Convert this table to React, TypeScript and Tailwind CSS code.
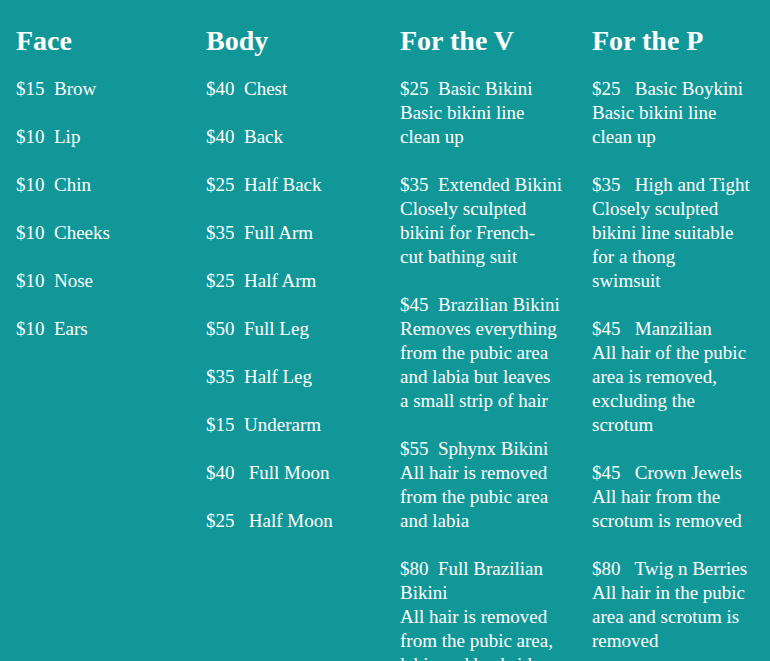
import React from 'react';

type Item = { price: string; name: string; lines?: string[] };

const columns: { title: string; items: Item[] }[] = [
  {
    title: 'Face',
    items: [
      { price: '$15', name: 'Brow' },
      { price: '$10', name: 'Lip' },
      { price: '$10', name: 'Chin' },
      { price: '$10', name: 'Cheeks' },
      { price: '$10', name: 'Nose' },
      { price: '$10', name: 'Ears' },
    ],
  },
  {
    title: 'Body',
    items: [
      { price: '$40', name: 'Chest' },
      { price: '$40', name: 'Back' },
      { price: '$25', name: 'Half Back' },
      { price: '$35', name: 'Full Arm' },
      { price: '$25', name: 'Half Arm' },
      { price: '$50', name: 'Full Leg' },
      { price: '$35', name: 'Half Leg' },
      { price: '$15', name: 'Underarm' },
      { price: '$40', name: ' Full Moon' },
      { price: '$25', name: ' Half Moon' },
    ],
  },
  {
    title: 'For the V',
    items: [
      { price: '$25', name: 'Basic Bikini', lines: ['Basic bikini line', 'clean up'] },
      { price: '$35', name: 'Extended Bikini', lines: ['Closely sculpted', 'bikini for French-', 'cut bathing suit'] },
      {
        price: '$45',
        name: 'Brazilian Bikini',
        lines: ['Removes everything', 'from the pubic area', 'and labia but leaves', 'a small strip of hair'],
      },
      { price: '$55', name: 'Sphynx Bikini', lines: ['All hair is removed', 'from the pubic area', 'and labia'] },
      {
        price: '$80',
        name: 'Full Brazilian',
        lines: ['Bikini', 'All hair is removed', 'from the pubic area,', 'labia and backside'],
      },
    ],
  },
  {
    title: 'For the P',
    items: [
      { price: '$25', name: ' Basic Boykini', lines: ['Basic bikini line', 'clean up'] },
      { price: '$35', name: ' High and Tight', lines: ['Closely sculpted', 'bikini line suitable', 'for a thong', 'swimsuit'] },
      { price: '$45', name: ' Manzilian', lines: ['All hair of the pubic', 'area is removed,', 'excluding the', 'scrotum'] },
      { price: '$45', name: ' Crown Jewels', lines: ['All hair from the', 'scrotum is removed'] },
      { price: '$80', name: ' Twig n Berries', lines: ['All hair in the pubic', 'area and scrotum is', 'removed'] },
    ],
  },
];

const App: React.FC = () => {
  return (
    <div className="h-[661px] w-[770px] overflow-hidden bg-[#129799] pl-4 pt-6 text-white [font-family:'Liberation_Serif',serif]">
      <div className="grid grid-cols-[190px_194px_192px_1fr]">
        {columns.map(col => (
          <div key={col.title}>
            <h2 className="text-[28px] font-bold leading-[34px]">{col.title}</h2>
            <div className="mt-[19px] flex flex-col gap-6 text-[19px] leading-6">
              {col.items.map(item => (
                <div key={item.price + item.name}>
                  <div className="whitespace-pre">
                    {item.price}
                    {'  '}
                    {item.name}
                  </div>
                  {item.lines?.map(l => (
                    <div key={l} className="whitespace-nowrap">
                      {l}
                    </div>
                  ))}
                </div>
              ))}
            </div>
          </div>
        ))}
      </div>
    </div>
  );
};

export default App;
